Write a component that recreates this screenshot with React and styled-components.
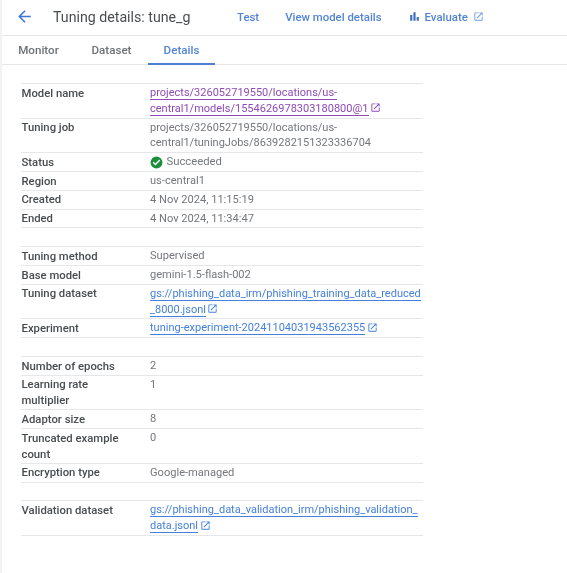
import React from "react";
import styled, { createGlobalStyle } from "styled-components";

const Global = createGlobalStyle`
  html, body { margin: 0; padding: 0; background: #fff; }
  body { font-family: Roboto, "Liberation Sans", sans-serif; }
`;

const Page = styled.div`
  position: relative;
  width: 567px;
  height: 573px;
  box-sizing: border-box;
  overflow: hidden;
  background: #fff;
  border-left: 2px solid #f1f2f3;
  filter: blur(0.3px);

  &::before {
    content: "";
    position: absolute;
    left: -2px;
    top: 264px;
    width: 1px;
    height: 268px;
    background: #dcdee0;
  }
`;

const Header = styled.header`
  height: 36px;
  box-sizing: border-box;
  display: flex;
  align-items: center;
  border-bottom: 1px solid #e6e7e9;
  padding-left: 13px;
  padding-bottom: 2px;
`;

const BackButton = styled.span`
  display: flex;
  width: 19px;
  color: #3f79d8;
`;

const Title = styled.h1`
  margin: 0 0 0 19px;
  width: 184px;
  font-size: 14.2px;
  font-weight: 400;
  color: #4a4d50;
  white-space: nowrap;
`;

const HeaderAction = styled.span`
  display: inline-flex;
  align-items: center;
  margin-left: ${(p) => p.$gap}px;
  font-size: 11.4px;
  font-weight: 500;
  color: #5284d6;
  white-space: nowrap;
`;

const Tabs = styled.nav`
  height: 29px;
  box-sizing: border-box;
  display: flex;
  border-bottom: 1px solid #e6e7e9;
`;

const Tab = styled.span`
  box-sizing: border-box;
  height: 29px;
  display: flex;
  align-items: center;
  justify-content: center;
  padding-top: 1px;
  width: ${(p) => p.$width}px;
  margin-left: ${(p) => p.$left}px;
  font-size: 11.6px;
  font-weight: 500;
  color: ${(p) => (p.$active ? "#5284d6" : "#6d7175")};
  border-bottom: 2px solid ${(p) => (p.$active ? "#4f7fcf" : "transparent")};
`;

const Table = styled.div`
  width: 402px;
  margin: 18px 0 0 19px;
  border-top: 1px solid #e6e7e9;
`;

const Row = styled.div`
  display: grid;
  grid-template-columns: 129px 1fr;
  box-sizing: border-box;
  border-bottom: 1px solid #e6e7e9;
  font-size: 11.1px;
  line-height: 15.8px;
  padding: 1px 0;
`;

const Spacer = styled.div`
  height: 17.8px;
  border-bottom: 1px solid #e6e7e9;
`;

const Label = styled.div`
  padding-left: 0.5px;
  padding-top: 0.6px;
  margin-bottom: -0.6px;
  font-size: 11.3px;
  font-weight: 500;
  color: #484c4f;
`;

const Value = styled.div`
  color: #74777b;
`;

const Line = styled.div`
  font-size: 11px;
  white-space: nowrap;
`;

const LinkText = styled.span`
  color: ${(p) => (p.$visited ? "#8f4ab8" : "#4480dc")};
  border-bottom: 1px solid ${(p) => (p.$visited ? "#8f4ab8" : "#4480dc")};
`;

const Status = styled.div`
  display: flex;
  align-items: center;
  gap: 3.5px;
  font-size: 11.3px;
`;

const ExternalIcon = ({ color = "#4480dc", left = 1.5, size = 11 }) => (
  <svg width={size} height={size} viewBox="0 0 24 24" style={{ marginLeft: left, verticalAlign: "-1.5px" }}>
    <path
      fill={color}
      d="M19 19H5V5h7V3H5a2 2 0 0 0-2 2v14a2 2 0 0 0 2 2h14a2 2 0 0 0 2-2v-7h-2v7zM14 3v2h3.59l-9.83 9.83 1.41 1.41L19 6.41V10h2V3h-7z"
    />
  </svg>
);

const App = () => (
  <Page>
    <Global />
    <Header>
      <BackButton>
        <svg width="19" height="19" viewBox="0 0 24 24">
          <path fill="currentColor" d="M20 11H7.83l5.59-5.59L12 4l-8 8 8 8 1.41-1.41L7.83 13H20v-2z" />
        </svg>
      </BackButton>
      <Title>Tuning details: tune_g</Title>
      <HeaderAction $gap={0}>Test</HeaderAction>
      <HeaderAction $gap={26}>View model details</HeaderAction>
      <HeaderAction $gap={26}>
        <svg width="13" height="13" viewBox="0 0 24 24" style={{ marginRight: 4 }}>
          <path fill="#3f6fc0" d="M4 9h4v11H4zM10 4h4v16h-4zM16 13h4v7h-4z" />
        </svg>
        Evaluate
        <ExternalIcon color="#6f9ae0" left={5} />
      </HeaderAction>
    </Header>
    <Tabs>
      <Tab $width={41} $left={16}>Monitor</Tab>
      <Tab $width={41} $left={32}>Dataset</Tab>
      <Tab $width={67} $left={16} $active>Details</Tab>
    </Tabs>
    <Table>
      <Row>
        <Label>Model name</Label>
        <Value>
          <Line><LinkText $visited>projects/326052719550/locations/us-</LinkText></Line>
          <Line><LinkText $visited>central1/models/1554626978303180800@1</LinkText><ExternalIcon color="#8f4ab8" /></Line>
        </Value>
      </Row>
      <Row>
        <Label>Tuning job</Label>
        <Value>
          <Line>projects/326052719550/locations/us-</Line>
          <Line>central1/tuningJobs/8639282151323336704</Line>
        </Value>
      </Row>
      <Row>
        <Label>Status</Label>
        <Value>
          <Status>
            <svg width="13" height="13" viewBox="0 0 24 24">
              <path fill="#1e8e3e" d="M12 1a11 11 0 1 0 0 22 11 11 0 0 0 0-22zm-2 16.4-5-5 1.8-1.8 3.2 3.2 7.2-7.2L19 8.4l-9 9z" />
            </svg>
            Succeeded
          </Status>
        </Value>
      </Row>
      <Row><Label>Region</Label><Value>us-central1</Value></Row>
      <Row><Label>Created</Label><Value>4 Nov 2024, 11:15:19</Value></Row>
      <Row><Label>Ended</Label><Value>4 Nov 2024, 11:34:47</Value></Row>
      <Spacer />
      <Row><Label>Tuning method</Label><Value>Supervised</Value></Row>
      <Row><Label>Base model</Label><Value>gemini-1.5-flash-002</Value></Row>
      <Row>
        <Label>Tuning dataset</Label>
        <Value>
          <Line><LinkText>gs://phishing_data_irm/phishing_training_data_reduced</LinkText></Line>
          <Line><LinkText>_8000.jsonl</LinkText><ExternalIcon /></Line>
        </Value>
      </Row>
      <Row>
        <Label>Experiment</Label>
        <Value><Line><LinkText>tuning-experiment-20241104031943562355</LinkText><ExternalIcon /></Line></Value>
      </Row>
      <Spacer />
      <Row><Label>Number of epochs</Label><Value>2</Value></Row>
      <Row><Label>Learning rate<br />multiplier</Label><Value>1</Value></Row>
      <Row><Label>Adaptor size</Label><Value>8</Value></Row>
      <Row><Label>Truncated example<br />count</Label><Value>0</Value></Row>
      <Row><Label>Encryption type</Label><Value>Google-managed</Value></Row>
      <Spacer />
      <Row>
        <Label>Validation dataset</Label>
        <Value>
          <Line><LinkText>gs://phishing_data_validation_irm/phishing_validation_</LinkText></Line>
          <Line><LinkText>data.jsonl</LinkText><ExternalIcon /></Line>
        </Value>
      </Row>
    </Table>
  </Page>
);

export default App;
